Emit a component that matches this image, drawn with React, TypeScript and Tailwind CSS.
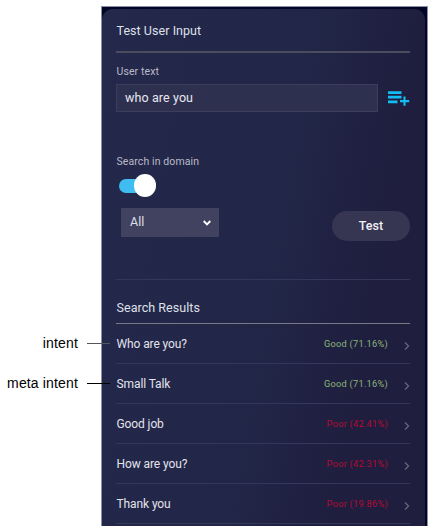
const results = [
  { name: "Who are you?", score: "Good (71.16%)", good: true },
  { name: "Small Talk", score: "Good (71.16%)", good: true },
  { name: "Good job", score: "Poor (42.41%)", good: false },
  { name: "How are you?", score: "Poor (42.31%)", good: false },
  { name: "Thank you", score: "Poor (19.86%)", good: false },
];

function Callout({ label, tone }: { label: string; tone: string }) {
  return (
    <div className="flex h-10 items-center justify-end">
      <span className="whitespace-nowrap font-['Liberation_Sans',Arial,sans-serif] text-[14px] leading-5 tracking-[0.15px] text-black">
        {label}
      </span>
      <span className={`ml-[9px] h-px w-[23px] shrink-0 ${tone}`} />
    </div>
  );
}

function AddToListIcon() {
  return (
    <svg width="22" height="16" viewBox="0 0 22 16" fill="none" stroke="#12bdf2" strokeWidth="2.8">
      <path d="M0 1.6H13.5M0 6.2H13.5M0 10.9H9.5" />
      <path d="M12 10.1H21.2M16.5 5.5V14.7" strokeWidth="2.1" />
    </svg>
  );
}

function ResultRow({ name, score, good }: { name: string; score: string; good: boolean }) {
  return (
    <li className="flex h-10 items-center border-b border-[#34365a]">
      <span className="flex-1 pl-[0.5px] pt-px text-[12px] tracking-[-0.1px] text-[#e2e3eb]">{name}</span>
      <span className={`pt-px text-[9.25px] tracking-[0.25px] ${good ? "text-[#8ab876]" : "text-[#b30a35]"}`}>
        {score}
      </span>
      <svg className="ml-[16px] mt-[5px]" width="6" height="8" viewBox="0 0 6 8" fill="none" stroke="#66677a" strokeWidth="1.3">
        <path d="M1 0.5L4.5 4L1 7.5" />
      </svg>
    </li>
  );
}

export default function App() {
  return (
    <div className="flex h-[532px] w-[432px] overflow-hidden bg-white pt-[6px] font-[Roboto,sans-serif]">
      <aside className="z-10 -mr-[9px] w-[110px] shrink-0 pt-[317px]">
        <Callout label="intent" tone="bg-[#55565c]" />
        <Callout label="meta intent" tone="bg-black" />
      </aside>
      <div className="h-[520px] w-[327px] shrink-0 overflow-hidden border-x border-t border-[#8d90a5] bg-[#020526] pr-[2px] pt-[2px]">
        <main className="h-[520px] rounded-t-[11px] bg-[linear-gradient(100deg,#24284b_0%,#212546_55%,#1f1e3f_78%,#1f1e3e_100%)] pl-[14px] pr-[15px]">
          <h1 className="flex h-[44px] items-center border-b-2 border-[#4c4c61] pl-[0.5px] pt-[3px] text-[12.5px] font-normal tracking-[0.05px] text-[#dfe0e9]">
            Test User Input
          </h1>
          <label className="flex h-[31px] items-center pl-[0.5px] pt-[6px] text-[10.5px] tracking-[0.1px] text-[#b9bac8]">
            User text
          </label>
          <div className="flex h-[28px] items-center">
            <div className="flex h-[28px] w-[262px] items-center border border-[#3c3d5b] bg-[#2e3050] pl-[8px] text-[12.5px] tracking-[0.1px] text-[#e8e8ef]">
              who are you
            </div>
            <div className="ml-[10px] mt-[1px]">
              <AddToListIcon />
            </div>
          </div>
          <div className="mt-[40px] flex h-[18px] items-center pl-[0.5px] pt-[2px] text-[10.5px] tracking-[0.1px] text-[#b9bac8]">
            Search in domain
          </div>
          <div className="ml-[3px] mt-[4px] flex h-[23px] items-center">
            <span className="h-[14px] w-[34px] rounded-full bg-[#40bdf0]" />
            <span className="-ml-[19.5px] size-[22.5px] rounded-full bg-white" />
          </div>
          <div className="ml-[5px] mt-[11px] flex items-start justify-between">
            <div className="flex h-[29px] w-[98px] items-center justify-between bg-[#41425f] pl-[9px] pr-[8px] text-[12.5px] text-[#dedfe8]">
              All
              <svg width="8" height="6" viewBox="0 0 8 6" fill="none" stroke="white" strokeWidth="1.9">
                <path d="M0.7 1L4 4.3L7.3 1" />
              </svg>
            </div>
            <button className="mt-[3px] h-[30px] w-[78px] rounded-full bg-[#363653] pt-px text-[12.5px] font-medium text-[#f0f0f5]">
              Test
            </button>
          </div>
          <div className="mt-[38px] h-px bg-[#34365a]" />
          <h2 className="flex h-[44px] items-center border-b border-[#777984] pl-[0.5px] pt-[14px] text-[12.5px] font-normal tracking-[0.05px] text-[#dfe0e9]">
            Search Results
          </h2>
          <ul>
            {results.map((row) => (
              <ResultRow key={row.name} {...row} />
            ))}
          </ul>
        </main>
      </div>
    </div>
  );
}
